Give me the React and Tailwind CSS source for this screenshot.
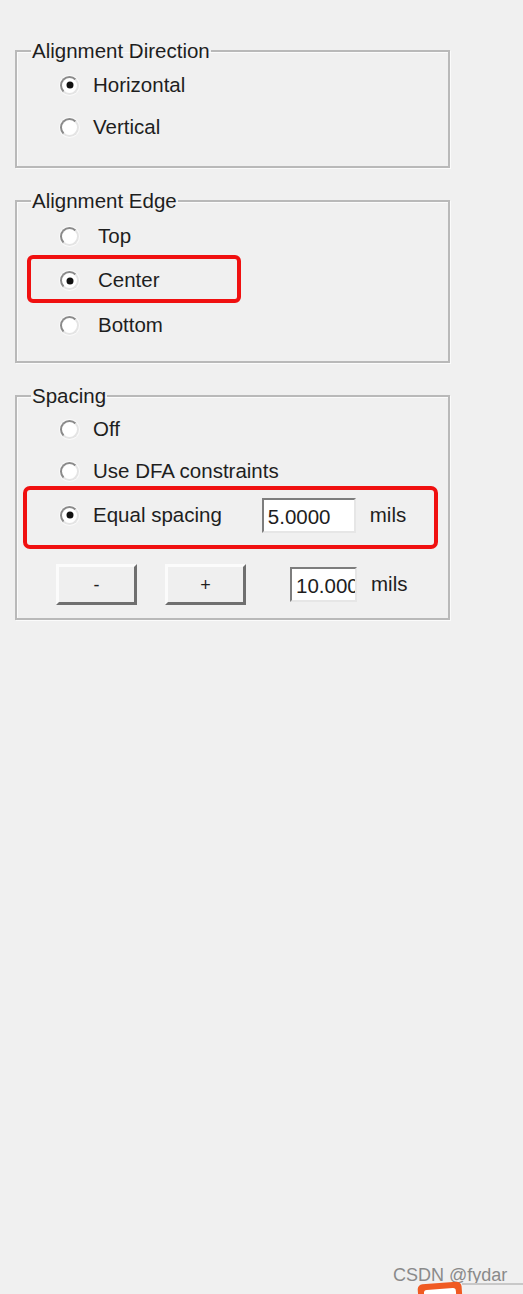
import React from 'react'

const font = { fontFamily: '"Liberation Sans", Arial, sans-serif' }

function Radio({ checked }) {
  return (
    <span className="relative inline-block w-[19px] h-[19px] rounded-full bg-white shrink-0 border-2 border-t-[#8a8a8a] border-l-[#8a8a8a] border-b-[#e4e4e4] border-r-[#e4e4e4] shadow-[0_0_0_1px_#fafafa]">
      {checked && <span className="absolute left-1/2 top-1/2 -translate-x-1/2 -translate-y-1/2 w-[7px] h-[7px] rounded-full bg-[#111]" />}
    </span>
  )
}

function Row({ checked, label, h, gap = 'gap-[14px]', children, className = '' }) {
  return (
    <div className={`relative flex items-center pl-[43px] ${gap} ${h} ${className}`}>
      <Radio checked={checked} />
      <span>{label}</span>
      {children}
    </div>
  )
}

function Group({ title, className = '', children }) {
  return (
    <fieldset className={`w-[435px] border-2 border-[#b9b9b9] shadow-[inset_1px_1px_0_#fbfbfb,1px_1px_0_#fbfbfb] ${className}`}>
      <legend className="ml-[14px] px-[1px] leading-[22px]">{title}</legend>
      {children}
    </fieldset>
  )
}

function Field({ value, w }) {
  return (
    <div className={`${w} h-[35px] bg-white overflow-hidden whitespace-nowrap pl-[4px] leading-[33px] border-2 border-t-[#7d7d7d] border-l-[#7d7d7d] border-b-[#e6e6e6] border-r-[#e6e6e6]`}>
      {value}
    </div>
  )
}

function Btn({ label }) {
  return (
    <button className="w-[81px] h-[41px] bg-[#efefef] text-[18px] border-[3px] border-t-[#fbfbfb] border-l-[#fbfbfb] border-b-[#6f6f6f] border-r-[#6f6f6f] pt-[2px]">
      {label}
    </button>
  )
}

export default function App() {
  return (
    <div className="relative w-[523px] h-[1294px] bg-[#f0f0f0] text-[#1e1e1e] text-[20.5px] overflow-hidden" style={font}>
      <div className="pl-[15px] pt-[40px] flex flex-col gap-[22px]">
        <Group title="Alignment Direction" className="pt-[2px] pb-[18px]">
          <Row checked label="Horizontal" h="h-[42px]" />
          <Row label="Vertical" h="h-[42px]" />
        </Group>

        <Group title="Alignment Edge" className="pt-[2px] pb-[14px]">
          <Row label="Top" h="h-[44px]" gap="gap-[19px]" />
          <Row checked label="Center" h="h-[45px]" gap="gap-[19px]">
            <span className="absolute left-[10px] top-[-3px] w-[214px] h-[48px] rounded-[6px] border-[4px] border-[#f01010]" />
          </Row>
          <Row label="Bottom" h="h-[44px]" gap="gap-[19px]" />
        </Group>

        <Group title="Spacing" className="pt-[1px] pb-[13px]">
          <Row label="Off" h="h-[42px]" />
          <Row label="Use DFA constraints" h="h-[42px]" />
          <Row checked label="Equal spacing" h="h-[46px]">
            <div className="ml-[26px] flex items-center gap-[14px]">
              <Field value="5.0000" w="w-[94px]" />
              <span>mils</span>
            </div>
            <span className="absolute left-[6px] top-[-6px] w-[415px] h-[63px] rounded-[7px] border-[4px] border-[#f01010]" />
          </Row>
          <div className="mt-[25px] h-[42px] flex items-center pl-[39px]">
            <Btn label="-" />
            <div className="ml-[28px]"><Btn label="+" /></div>
            <div className="ml-[44px]"><Field value="10.000" w="w-[67px]" /></div>
            <span className="ml-[14px]">mils</span>
          </div>
        </Group>
      </div>

      <div className="absolute left-[393px] top-[1262px] text-[18px] text-[#8a8a8a]">CSDN @fydar</div>
      <div className="absolute left-[418px] top-[1283px] w-[44px] h-[20px] rounded-[5px] bg-[#f05a22] -rotate-[4deg]">
        <div className="m-[6px] h-[10px] rounded-[3px] bg-white" />
      </div>
      <div className="absolute left-[462px] top-[1283px] w-[61px] h-[2px] bg-[#c8c8c8]" />
    </div>
  )
}
